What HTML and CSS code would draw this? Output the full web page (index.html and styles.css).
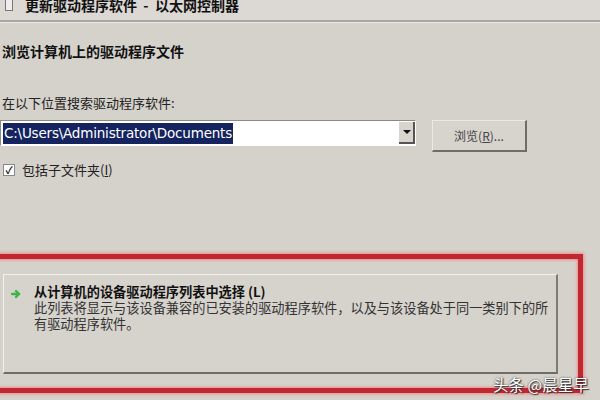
FILE: index.html
```html
<!DOCTYPE html>
<html lang="zh-CN">
<head>
  <meta charset="UTF-8">
  <title>更新驱动程序软件 - 以太网控制器</title>
  <link rel="stylesheet" href="styles.css">
</head>
<body>
  <div class="titlebar">
    <span class="title-icon"></span>
    <span class="title-text">更新驱动程序软件&nbsp; -&nbsp; 以太网控制器</span>
  </div>

  <div class="content">
    <div class="heading">浏览计算机上的驱动程序文件</div>

    <div class="label">在以下位置搜索驱动程序软件:</div>
    <div class="path-row">
      <div class="combo">
        <span class="combo-text">C:\Users\Administrator\Documents</span>
        <span class="combo-arrow"></span>
      </div>
      <div class="button">浏览(<u>R</u>)...</div>
    </div>

    <div class="check-row">
      <span class="checkbox">&#10003;</span>
      <span>包括子文件夹(<u>I</u>)</span>
    </div>
  </div>

  <div class="highlight">
    <div class="choice">
      <svg class="arrow" width="10" height="10" viewBox="0 0 10 10">
        <path d="M1 5 H8 M5 2 L8 5 L5 8" stroke="#3cb54a" stroke-width="2.4" fill="none" stroke-linecap="round"/>
      </svg>
      <div class="choice-body">
        <div class="choice-title">从计算机的设备驱动程序列表中选择 (L)</div>
        <div class="choice-desc">此列表将显示与该设备兼容的已安装的驱动程序软件，以及与该设备处于同一类别下的所有驱动程序软件。</div>
      </div>
    </div>
  </div>

  <div class="watermark">头条 @晨星早</div>
</body>
</html>
```

FILE: styles.css
```css
body {
  margin: 0;
  width: 600px;
  height: 400px;
  overflow: hidden;
  position: relative;
  background-color: #d5d1cb;
  font-family: "Noto Sans CJK SC", "Liberation Sans", sans-serif;
  font-size: 13px;
  color: #222;
}

.titlebar {
  height: 20px;
  display: flex;
  align-items: flex-start;
  padding-left: 5px;
  background-color: #dcd8d3;
  border-bottom: 2px solid #a9a5a0;
  box-shadow: 0 1px 0 #ebe8e4;
}

.title-icon {
  width: 6px;
  height: 10px;
  border: 1px solid #777;
  border-top: none;
  background-color: #eee;
}

.title-text {
  margin-left: 12px;
  margin-top: -4px;
  font-size: 14px;
  font-weight: bold;
  line-height: 18px;
  color: #111;
}

.content {
  padding: 0 0 0 2px;
}

.heading {
  margin-top: 19px;
  font-size: 14px;
  font-weight: bold;
  line-height: 20px;
  color: #111;
}

.label {
  margin-top: 32px;
  line-height: 20px;
}

.path-row {
  display: flex;
  align-items: flex-start;
  margin-top: 7px;
  margin-left: -2px;
}

.combo {
  width: 414px;
  height: 24px;
  display: flex;
  align-items: center;
  background-color: #fff;
  border: 1px solid #8d8a86;
  border-right-color: #fff;
  border-bottom-color: #fff;
}

.combo-text {
  margin-left: 2px;
  padding: 0 1px;
  height: 21px;
  line-height: 21px;
  background-color: #15245f;
  color: #fff;
  font-family: "DejaVu Sans", sans-serif;
  font-size: 13.5px;
  letter-spacing: -0.2px;
}

.combo-arrow {
  margin-left: auto;
  width: 16px;
  height: 22px;
  background-color: #d8d4ce;
  border-right: 2px solid #555;
  border-bottom: 2px solid #555;
  box-sizing: border-box;
  position: relative;
}

.combo-arrow::after {
  content: "";
  position: absolute;
  left: 4px;
  top: 8px;
  border: 4px solid transparent;
  border-top: 4px solid #111;
  border-bottom: none;
}

.button {
  margin-left: 16px;
  width: 95px;
  height: 32px;
  display: flex;
  align-items: center;
  justify-content: center;
  box-sizing: border-box;
  background-color: #d7d3cd;
  border: 1px solid #ece9e5;
  border-right: 2px solid #6f6c69;
  border-bottom: 2px solid #6f6c69;
  color: #444;
  font-size: 12px;
}

.check-row {
  display: flex;
  align-items: center;
  margin-top: 9px;
  line-height: 18px;
}

.checkbox {
  width: 10px;
  height: 10px;
  display: flex;
  align-items: center;
  justify-content: center;
  margin: 0 7px 0 1px;
  background-color: #fff;
  border: 1px solid #888;
  font-size: 10px;
  font-weight: bold;
  color: #111;
}

.highlight {
  box-sizing: border-box;
  margin: 75px 0 0 -12px;
  width: 595px;
  height: 139px;
  border: 5px solid #c0282f;
  box-shadow: 0 0 3px 1px #f08a8e, inset 0 0 3px 1px #f08a8e;
  padding-top: 15px;
  padding-left: 10px;
}

.choice {
  width: 555px;
  height: 100px;
  box-sizing: border-box;
  display: flex;
  align-items: flex-start;
  padding: 8px 0 0 7px;
  background-color: #d6d2cc;
  border: 1px solid #f3f1ee;
  border-right: 2px solid #7e7b77;
  border-bottom: 2px solid #6f6c69;
}

.arrow {
  margin-top: 6px;
  flex-shrink: 0;
}

.choice-body {
  margin-left: 13px;
  font-size: 13.2px;
  line-height: 16px;
}

.choice-title {
  font-weight: bold;
  line-height: 17px;
  color: #111;
}

.choice-desc {
  color: #333;
}

.watermark {
  position: absolute;
  left: 493px;
  top: 373px;
  font-size: 15.5px;
  color: #fff;
  text-shadow: 0 0 2px #333, 1px 1px 1px #333;
}
```
